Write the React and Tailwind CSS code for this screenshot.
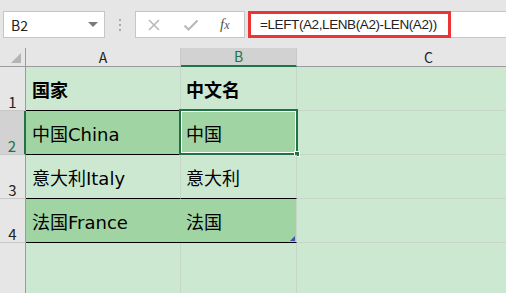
const rows = [
  { n: 1, a: "国家", b: "中文名", bold: true },
  { n: 2, a: "中国China", b: "中国", dark: true, sel: true },
  { n: 3, a: "意大利Italy", b: "意大利" },
  { n: 4, a: "法国France", b: "法国", dark: true, mark: true },
];

export default function App() {
  return (
    <div className="w-[506px] h-[293px] overflow-hidden bg-[#e6e6e6] font-['Noto_Sans_CJK_SC',sans-serif] text-black">
      {/* formula bar */}
      <div className="h-[48px] flex items-start pt-[11px] pl-[3px]">
        <div className="w-[102px] shrink-0 h-[27px] bg-white border border-[#c6c6c6] flex items-center justify-between pl-[7px] pr-[6px]">
          <span className="text-[14px] leading-none text-[#222]">B2</span>
          <span className="w-0 h-0 border-l-[5px] border-r-[5px] border-t-[5px] border-l-transparent border-r-transparent border-t-[#7a7a7a]" />
        </div>
        <div className="w-[30px] shrink-0 h-[27px] flex flex-col items-center justify-center gap-[3px]">
          <span className="w-[2px] h-[2px] bg-[#a8a8a8]" />
          <span className="w-[2px] h-[2px] bg-[#a8a8a8]" />
          <span className="w-[2px] h-[2px] bg-[#a8a8a8]" />
        </div>
        <div className="w-[110px] shrink-0 h-[27px] bg-white border border-[#c6c6c6] flex items-center">
          <svg width="14" height="14" viewBox="0 0 14 14" className="ml-[11px]">
            <path d="M2 2 L12 12 M12 2 L2 12" stroke="#b8b8b8" strokeWidth="1.6" />
          </svg>
          <svg width="16" height="14" viewBox="0 0 16 14" className="ml-[22px]">
            <path d="M1.5 7.5 L5.5 11.5 L14.5 2.5" stroke="#b8b8b8" strokeWidth="2" fill="none" />
          </svg>
          <span className="ml-[21px] text-[15px] italic text-[#555] font-['Liberation_Serif',serif] leading-none">
            f<span className="text-[12px]">x</span>
          </span>
        </div>
        <div className="flex-1 h-[27px] bg-white border-y border-[#c6c6c6] ml-[3px] flex">
          <div className="w-[203px] shrink-0 -my-px h-[27px] border-[3px] border-[#ec3434] flex items-center pl-[9px]">
            <span className="whitespace-nowrap text-[13.5px] leading-none text-[#222] font-['Liberation_Sans',sans-serif] tracking-[-0.4px]">
              =LEFT(A2,LENB(A2)-LEN(A2))
            </span>
          </div>
        </div>
      </div>

      {/* sheet */}
      <div className="w-[560px] grid grid-cols-[26px_155px_116px_263px] grid-rows-[19px_44px_44px_44px_44px_50px]">
        {/* header row */}
        <div className="relative border-r border-b border-[#9b9b9b] bg-[#e6e6e6]">
          <span className="absolute right-[4px] bottom-[3px] w-0 h-0 border-l-[10px] border-l-transparent [border-bottom:10px_solid_#b4b4b4]" />
        </div>
        <div className="border-r border-b border-[#9b9b9b] border-r-[#c8c8c8] bg-[#e6e6e6] flex items-end justify-center text-[14px] leading-[18px] text-[#222]">
          A
        </div>
        <div className="border-r border-[#c8c8c8] border-b-2 border-b-[#217346] bg-[#d2d2d2] flex items-end justify-center text-[14px] leading-[17px] text-[#217346]">
          B
        </div>
        <div className="border-b border-[#9b9b9b] bg-[#e6e6e6] flex items-end justify-center text-[14px] leading-[18px] text-[#222]">
          C
        </div>

        {rows.map((r) => (
          <Row key={r.n} r={r} />
        ))}

        {/* row 5 */}
        <div className="border-r border-[#9b9b9b] bg-[#e6e6e6]" />
        <div className="border-r border-[#c6d6c8] bg-[#cde8d0]" />
        <div className="border-r border-[#c6d6c8] bg-[#cde8d0]" />
        <div className="bg-[#cde8d0]" />
      </div>
    </div>
  );
}

function Row({ r }) {
  const blackB = "border-b border-b-black";
  const fill = r.dark ? "bg-[#a0d4a3]" : "bg-[#cde8d0]";
  const text = `font-['DejaVu_Sans','Noto_Sans_CJK_SC',sans-serif] text-[18px] leading-none pt-[4px] ${r.bold ? "font-bold" : ""}`;
  return (
    <>
      <div
        className={`border-b border-b-[#c8c8c8] flex items-end justify-center pb-[1px] text-[15px] leading-none ${
          r.sel ? "bg-[#d2d2d2] border-r-2 border-r-[#217346] text-[#217346]" : "bg-[#e6e6e6] border-r border-r-[#9b9b9b] text-[#222]"
        }`}
      >
        {r.n}
      </div>
      <div className={`${fill} ${blackB} ${r.dark ? "" : "border-r border-r-[#c6d6c8]"} flex items-center pl-[6px] ${text}`}>
        {r.a}
      </div>
      <div className={`relative ${fill} ${blackB} border-r border-r-[#c6d6c8] flex items-center pl-[5px] ${text}`}>
        {r.b}
        {r.sel && (
          <div className="absolute -left-[2px] -top-[2px] -right-[2px] -bottom-[1px] border-2 border-[#217346]">
            <div className="w-full h-full border border-white" />
            <span className="absolute -right-[4px] -bottom-[4px] w-[6px] h-[6px] bg-[#217346] border border-white" />
          </div>
        )}
        {r.mark && (
          <span className="absolute right-[1px] bottom-[1px] w-0 h-0 border-l-[5px] border-l-transparent [border-bottom:5px_solid_#3c4fb5]" />
        )}
      </div>
      <div className="bg-[#cde8d0] border-b border-b-[#c6d6c8]" />
    </>
  );
}
